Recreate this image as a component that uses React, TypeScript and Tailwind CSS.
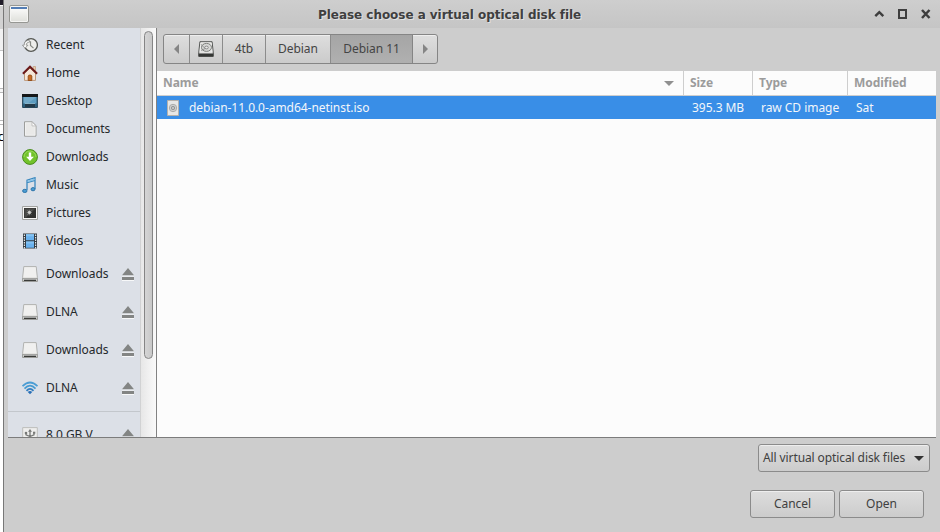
import React from "react";

type IconProps = { children: React.ReactNode; className?: string };
const Icon = ({ children, className = "" }: IconProps) => (
  <svg width="16" height="16" viewBox="0 0 16 16" fill="none" className={`shrink-0 ${className}`}>
    {children}
  </svg>
);

const RecentIcon = () => (
  <Icon>
    <circle cx="9" cy="8" r="6.4" fill="#eeeeec" stroke="#555753" strokeWidth="1.3" />
    <path d="M8.5 4.3v4.2l3 2.6" stroke="#888a85" strokeWidth="1.2" />
    <path d="M7.5 5.2C5.3 5 4.2 6.5 4.2 8.2H6L3 11.2.4 8.2h1.7C2.1 5 4.5 3 7.5 3.6z" fill="#f8f8f8" stroke="#8b8d8a" strokeWidth=".8" />
  </Icon>
);

const HomeIcon = () => (
  <Icon>
    <path d="M11.2 1.5h2.3v5h-2.3z" fill="#e8cdb0" stroke="#c09a78" strokeWidth=".7" />
    <path d="M2.5 8 8 2.8 13.5 8v7.4h-11z" fill="#f5e7d9" stroke="#bc9879" />
    <path d="M6.2 15.5v-4.3q0-1.2 1.8-1.2t1.8 1.2v4.3z" fill="#c96a22" stroke="#8f4a14" strokeWidth=".9" />
    <path d="M.9 8.7 8 1.7l7.1 7" stroke="#6b1a1a" strokeWidth="2.1" />
  </Icon>
);

const DesktopIcon = () => (
  <Icon>
    <path d="M.6 1.5h14.8v13H.6z" fill="#2c607f" stroke="#27475a" />
    <path d="M1.5 4h13v6.5h-13z" fill="#5c9cc0" />
    <path d="M1.5 4h13L6 10.5H1.5z" fill="#80b3cd" opacity=".6" />
    <path d="M0 1h16v3H0z" fill="#151719" />
    <path d="M3 11h10v3H3z" fill="#233948" />
    <path d="M3 10.5h10" stroke="#9bc4d6" strokeWidth=".7" />
  </Icon>
);

const DocumentIcon = () => (
  <Icon>
    <path d="M2.5.8h7.6L14 4.6v10.6H2.5z" fill="#e9e9e8" stroke="#9c9d9b" />
    <path d="M3.5 1.8h6.1l3.4 3.3v9.1H3.5z" stroke="#f5f5f5" strokeWidth=".7" />
    <path d="M10 .9v4h4z" fill="#fff" stroke="#b5b5b5" strokeWidth=".8" />
  </Icon>
);

const DownloadIcon = () => (
  <Icon>
    <circle cx="8" cy="8" r="7.4" fill="#73c32b" stroke="#488b1d" />
    <path d="M2 8a6 6 0 0 1 12 0" stroke="#98d95c" />
    <path d="M6.8 3.4h2.4v4.4h2.7L8 12 4.1 7.8h2.7z" fill="#fff" />
  </Icon>
);

const MusicIcon = () => (
  <Icon>
    <path d="M5 13V3.2l8-2.5v11.2M5 5.7l8-2.4" stroke="#3a88bf" strokeWidth="1.3" />
    <path d="m5.5 3.7 7-2.1v1.6l-7 2.1z" fill="#8bc4e8" />
    <ellipse cx="2.8" cy="13.9" rx="2.2" ry="1.6" fill="#4a9cd3" stroke="#2e75aa" />
    <ellipse cx="11" cy="12.2" rx="2" ry="1.6" fill="#4a9cd3" stroke="#2e75aa" />
  </Icon>
);

const PictureIcon = () => (
  <Icon>
    <path d="M.5 1.5h15v13H.5z" fill="#f6f6f5" stroke="#a3a4a2" />
    <path d="M2 3h12v10H2z" fill="#30312f" />
    <path d="M2.5 3.5h11L4 12.5H2.5z" fill="#4a4b49" />
    <path d="M7.3 4.8v5.5M4.8 7.5h5M5.5 5.7l3.8 3.7M9.3 5.7 5.5 9.4" stroke="#8f918e" strokeWidth=".9" />
    <circle cx="7.4" cy="7.5" r="1.4" fill="#d0d0ce" />
  </Icon>
);

const VideoIcon = () => (
  <Icon>
    <path d="M1 .5h14v15H1z" fill="#343c43" />
    <path d="M4 1.2h8v6H4zM4 8.6h8v6.2H4z" fill="#69b1ee" />
    <path d="M4 1.2h8v2H4zM4 8.6h8v2H4z" fill="#84c3f4" />
    <path d="M2.4 1.5v14M13.6 1.5v14" stroke="#e1e5e8" strokeWidth="1.2" strokeDasharray="1.4 1.1" />
  </Icon>
);

const DriveIcon = () => (
  <Icon>
    <path d="M1.8.6h12.4l1.2 11v3.8H.6v-3.8z" fill="#ececeb" stroke="#b1b2b0" />
    <path d="M2.5 1.5h11l.8 9.7H1.7z" fill="#f0f0ef" />
    <path d="M.7 12.4h14.6v3H.7z" fill="#d8d9d7" stroke="#8a8c89" strokeWidth=".8" />
    <path d="M2 14.3h12" stroke="#292b29" strokeWidth="1.2" />
  </Icon>
);

const WifiIcon = () => (
  <Icon>
    <path d="M.5 6.2Q8-1.2 15.5 6.2" stroke="#4b9dd4" strokeWidth="1.8" />
    <path d="M2.5 8.6Q8 2.8 13.5 8.6" stroke="#459bd2" strokeWidth="1.7" />
    <path d="M4.5 10.9Q8 6.9 11.5 10.9" stroke="#347fc1" strokeWidth="1.7" />
    <path d="M5.8 12.1Q8 9.8 10.2 12.1L8 14.3z" fill="#286eb5" />
  </Icon>
);

const UsbIcon = () => (
  <Icon>
    <path d="M.7.6h14.6v14.8H.7z" fill="#eeeeed" stroke="#bdbebc" />
    <path d="M8 13V4M4 6v1.8L8 9.5l4-1.7V5.5" stroke="#777977" strokeWidth="1.3" />
    <path d="m8 2 2 2.8H6z" fill="#777977" />
    <circle cx="4" cy="6" r="1.3" fill="#777977" />
    <path d="M11 4.7h2.3v2H11z" fill="#777977" />
  </Icon>
);

const Eject = () => (
  <svg width="12" height="13" viewBox="0 0 12 13" className="shrink-0">
    <path d="M0 8h12M0 12.5h12" stroke="#f7f8f9" />
    <path d="M6 0 12 7.3H0zM0 9h12v3H0z" fill="#838584" />
  </svg>
);

const HardDiskIcon = () => (
  <Icon>
    <path d="M1.9.7h12.2l1.2 11.2v3.5H.7v-3.5z" fill="#d9d9d8" stroke="#565856" />
    <path d="M2.8 2h10.4l.7 9H2.1z" stroke="#f5f5f4" strokeWidth=".8" />
    <ellipse cx="8.5" cy="6.4" rx="5" ry="4" fill="#d7d8d6" stroke="#757774" strokeWidth=".9" />
    <ellipse cx="8.5" cy="6.5" rx="1.8" ry="1.4" fill="#e8e8e7" stroke="#777" strokeWidth=".8" />
    <path d="m3 3.2 4 4.3M3.2 9.5l4-2" stroke="#868886" strokeWidth=".8" />
    <path d="M.7 12.5h14.6v3H.7z" fill="#353735" />
  </Icon>
);

const DiscFileIcon = () => (
  <svg width="12" height="16" viewBox="0 0 12 16" fill="none" className="shrink-0">
    <path d="M.5.5h11v15H.5z" fill="#e7e7e6" stroke="#b5b1ab" />
    <circle cx="6" cy="8" r="3.7" fill="#d2d2d1" stroke="#a5a6a5" strokeWidth=".9" />
    <circle cx="6" cy="8" r="1.7" fill="#c2c3c2" stroke="#969796" />
  </svg>
);

const places = [
  ["Recent", RecentIcon], ["Home", HomeIcon], ["Desktop", DesktopIcon], ["Documents", DocumentIcon],
  ["Downloads", DownloadIcon], ["Music", MusicIcon], ["Pictures", PictureIcon], ["Videos", VideoIcon],
] as const;
const volumes = [
  ["Downloads", DriveIcon], ["DLNA", DriveIcon], ["Downloads", DriveIcon], ["DLNA", WifiIcon],
] as const;

const Volume = ({ label, Glyph }: { label: string; Glyph: () => React.JSX.Element }) => (
  <div className="flex h-[38px] items-center pr-[6px] pl-[14px]">
    <Glyph />
    <span className="ml-2 flex-1 whitespace-nowrap">{label}</span>
    <Eject />
  </div>
);

const Sidebar = () => (
  <aside className="flex h-[409px] w-[149px] shrink-0 overflow-hidden border-r border-[#828282]">
    <nav className="w-[132px] shrink-0 bg-[#dce0e7] pt-[3px]">
      {places.map(([label, Glyph]) => (
        <div key={label} className="flex h-7 items-center gap-2 pl-[14px]"><Glyph /><span>{label}</span></div>
      ))}
      {volumes.map(([label, Glyph], i) => <Volume key={i} label={label} Glyph={Glyph} />)}
      <div className="mt-[4px] mb-[4px] h-px bg-[#c3c7cc]" />
      <Volume label="8.0 GB V..." Glyph={UsbIcon} />
    </nav>
    <div className="flex flex-1 justify-center border-l border-[#d1d2d3] bg-gradient-to-r from-[#e7e7e7] to-[#fafafa] pt-[3px]">
      <div className="h-[328px] w-[9px] rounded-full border border-[#858585] bg-gradient-to-r from-[#d5d5d5] to-[#c8c8c8]" />
    </div>
  </aside>
);

const PathBar = () => (
  <div className="ml-[6px] mt-[6px] flex h-[30px] w-[275px] overflow-hidden rounded-[3px] border border-[#858585] bg-gradient-to-b from-[#dedede] to-[#cbcbcb] text-[#444] shadow-[inset_0_1px_0_#eeeeee]">
    <button className="flex w-[26px] items-center justify-center border-r border-[#8c8c8c] pr-px">
      <svg width="5" height="10" viewBox="0 0 5 10"><path d="M5 0v10L0 5z" fill="#858585" /></svg>
    </button>
    <button className="flex w-[33px] items-center justify-center border-r border-[#8c8c8c]"><HardDiskIcon /></button>
    <button className="w-[43px] border-r border-[#8c8c8c]">4tb</button>
    <button className="w-[65px] border-r border-[#8c8c8c]">Debian</button>
    <button className="w-[82px] border-r border-[#858585] bg-gradient-to-b from-[#a5a5a5] to-[#b0b0b0]">Debian 11</button>
    <button className="flex flex-1 items-center justify-center">
      <svg width="5" height="10" viewBox="0 0 5 10"><path d="M0 0v10l5-5z" fill="#858585" /></svg>
    </button>
  </div>
);

const FileTable = () => (
  <div className="mt-[7px] h-[366px] bg-[#fcfcfc]">
    <div className="flex h-[25px] border-b border-[#cecece] font-bold leading-[23px] text-[#9b9b9b]">
      <div className="flex w-[527px] items-center justify-between border-r border-[#cecece] pr-[9px] pl-[6px]">
        <span className="self-start">Name</span><svg width="10" height="5" viewBox="0 0 10 5"><path d="M0 0h10L5 5z" fill="#909090" /></svg>
      </div>
      <div className="w-[69px] border-r border-[#cecece] pl-[6px]">Size</div>
      <div className="w-[95px] border-r border-[#cecece] pl-[6px]">Type</div>
      <div className="pl-[6px]">Modified</div>
    </div>
    <div className="flex h-[23px] items-center bg-[#398ee7] leading-[22px] text-[#f3f6fa]">
      <div className="flex w-[527px] items-center pl-[10px]"><DiscFileIcon /><span className="ml-[10px]">debian-11.0.0-amd64-netinst.iso</span></div>
      <div className="w-[69px] pl-2">395.3 MB</div><div className="w-[95px] pl-2">raw CD image</div><div className="pl-2">Sat</div>
    </div>
  </div>
);

const buttonStyle = "flex h-7 items-center rounded-[3px] border border-[#8b8b8b] bg-gradient-to-b from-[#dddddd] to-[#cccccc] text-[#404040] shadow-[inset_0_1px_0_#eeeeee]";

export default function App() {
  return (
    <div className="flex h-[532px] w-[940px] overflow-hidden bg-[#cdcdcd] font-['Noto_Sans','Liberation_Sans',sans-serif] text-[12px] leading-[18px] tracking-[-0.045px] text-[#25282b]">
      <div className="relative flex w-1 shrink-0 flex-col overflow-hidden border-r border-[#777] bg-white">
        <div className="h-[5px] bg-[#211d2a]" />
        <div className="mt-px h-[23px] bg-[#d2d2d2]" />
        <div className="h-[22px] border-b border-[#c5c5c5] bg-[#f1f1f1]" />
        <div className="mt-[37px] h-[5px] border-y border-[#b9b9b9] bg-[#f6f6f6]" />
        <div className="mt-[27px] h-[5px] border-y border-[#b9b9b9]" />
        <span className="absolute top-[128px] -left-[2px] text-black">c</span>
      </div>
      <div className="flex w-[936px] flex-col">
        <header className="flex h-7 shrink-0 items-center bg-gradient-to-b from-[#cecece] to-[#c5c5c5]">
          <div className="ml-[5px] h-[18px] w-5 rounded-[2px] border border-[#969793] bg-gradient-to-b from-white to-[#dedfda] shadow-[inset_0_0_0_1px_#f4f4f2]"><div className="mx-px mt-px h-[2px] bg-[#537db5]" /></div>
          <h1 className="ml-[289px] w-[265px] whitespace-nowrap pt-px font-['DejaVu_Sans',sans-serif] text-[12px] font-bold tracking-[-0.04px] text-[#3f3f3f] [font-variant-ligatures:common-ligatures] [text-shadow:1px_1px_0_#e2e2e2]">Please choose a virtual optical disk file</h1>
          <svg width="58" height="12" viewBox="0 0 58 12" fill="none" className="ml-[291px]" stroke="#3e3e3e">
            <path d="m1.3 8.2 4-4 4 4" strokeWidth="2.4" /><path d="M25 2h7v8h-7z" strokeWidth="2" /><path d="m48 2 7.5 8M55.5 2 48 10" strokeWidth="2.5" />
          </svg>
        </header>
        <main className="mx-1 flex h-[410px] shrink-0 border-b border-[#7c7c7c]">
          <Sidebar />
          <section className="w-[779px]"><PathBar /><FileTable /></section>
        </main>
        <footer className="flex flex-1 flex-col items-end pt-[6px]">
          <button className={`${buttonStyle} mr-[10px] w-[172px] justify-between pr-[5px] pl-[4px]`}>
            <span className="whitespace-nowrap tracking-[-0.1px]">All virtual optical disk files</span><svg width="10" height="5" viewBox="0 0 10 5"><path d="M0 0h10L5 5z" fill="#333" /></svg>
          </button>
          <div className="mt-[18px] mr-4 flex gap-1"><button className={`${buttonStyle} w-[85px] justify-center`}>Cancel</button><button className={`${buttonStyle} w-[85px] justify-center`}>Open</button></div>
        </footer>
      </div>
    </div>
  );
}
